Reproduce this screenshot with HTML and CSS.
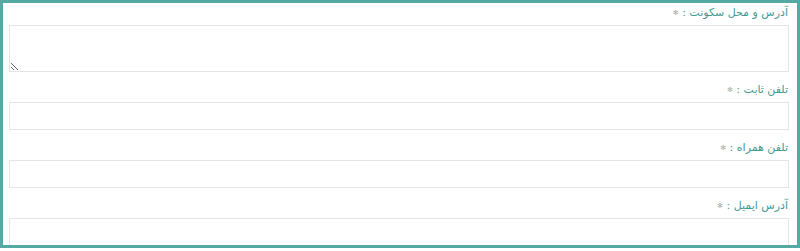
FILE: index.html
```html
<!DOCTYPE html>
<html lang="fa" dir="rtl">
<head>
  <meta charset="UTF-8">
  <meta name="viewport" content="width=device-width, initial-scale=1.0">
  <title>فرم اطلاعات تماس</title>
  <link rel="stylesheet" href="styles.css">
</head>
<body>
  <div class="box">
    <label class="field-label first">آدرس و محل سکونت : <span class="req">✻</span></label>
    <textarea class="field-area"></textarea>

    <label class="field-label">تلفن ثابت : <span class="req">✻</span></label>
    <input type="text" class="field-input">

    <label class="field-label">تلفن همراه : <span class="req">✻</span></label>
    <input type="text" class="field-input">

    <label class="field-label">آدرس ایمیل : <span class="req">✻</span></label>
    <input type="text" class="field-input">
  </div>
</body>
</html>
```

FILE: styles.css
```css
body { margin: 0; font-family: "DejaVu Sans", sans-serif; background: #fff; }
.box { width: 800px; height: 248px; box-sizing: border-box; border: 3px solid #52aaa3; padding: 0 8px 0 6px; overflow: hidden; }
.field-label { display: block; height: 22px; line-height: 20px; margin-top: 8px; font-size: 11px; color: #43998f; padding-right: 1px; }
.field-label.first { margin-top: 0; }
.req { color: #a9a9a9; font-size: 7px; vertical-align: 1px; }
.field-area, .field-input { display: block; width: 100%; box-sizing: border-box; border: 1px solid #e4e4e4; background: #fff; margin: 0; font-family: inherit; }
.field-area { height: 47px; resize: both; }
.field-input { height: 28px; }
```
